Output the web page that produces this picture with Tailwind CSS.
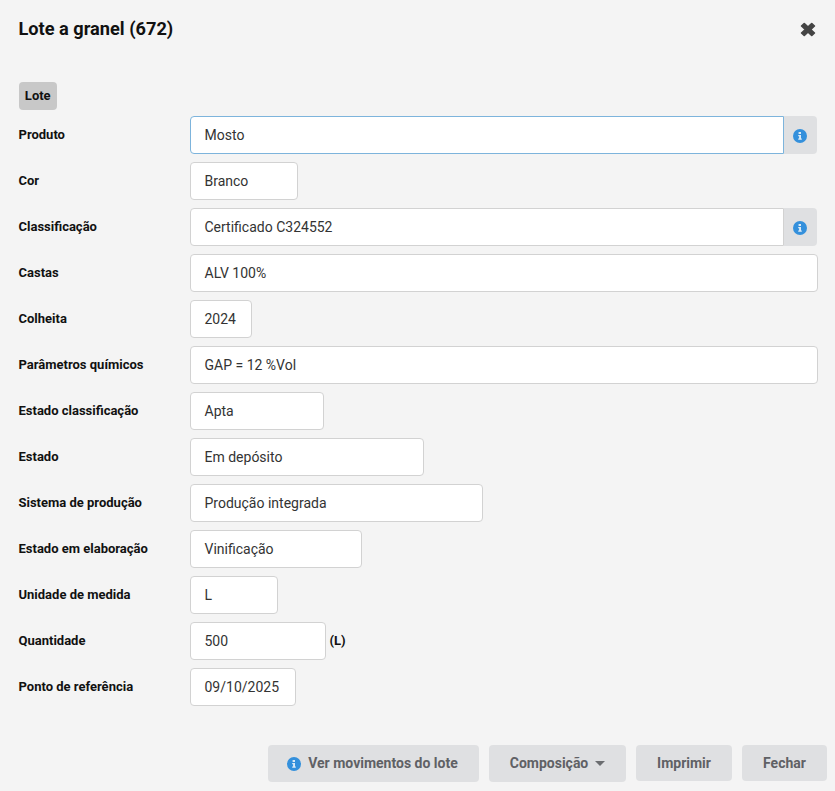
<!DOCTYPE html>
<html lang="pt">
<head>
<meta charset="utf-8">
<script src="https://cdn.jsdelivr.net/npm/@tailwindcss/browser@4"></script>
<title>Lote a granel</title>
</head>
<body class="bg-[#f4f4f4] font-['Roboto',sans-serif] text-[#111]">
<div class="w-[835px] h-[791px] overflow-hidden flex flex-col">
  <header class="h-[82px] pl-[18.5px] pr-[19px] flex items-start justify-between shrink-0">
    <h1 class="mt-[17px] text-[18.2px] leading-[24px] font-bold">Lote a granel (672)</h1>
    <svg class="mt-[22px] w-[16px] h-[15px]" viewBox="0 0 15 15" preserveAspectRatio="none"><path d="M1.5 4 L4 1.5 L7.5 5 L11 1.5 L13.5 4 L10 7.5 L13.5 11 L11 13.5 L7.5 10 L4 13.5 L1.5 11 L5 7.5 Z" fill="#444" stroke="#444" stroke-width="1.6" stroke-linejoin="round"/></svg>
  </header>
  <main class="pl-[18.5px] pr-[17px] flex-1 flex flex-col">
    <div class="h-[28px] w-[38.5px] rounded-[4px] bg-[#c8c8c8] text-[13px] font-bold flex items-center justify-center mb-[6px]">Lote</div>
    <div class="flex flex-col gap-[8px]">
      <div class="flex items-center h-[38px]">
        <label class="w-[171.5px] text-[13px] font-bold -mt-[1px]">Produto</label>
        <div class="flex-1 flex h-[38px] mr-[1px]">
          <div class="flex-1 h-full bg-white border border-[#7db4dc] rounded-l-[4px] pl-[13.5px] pr-[14px] flex items-center text-[14px] text-[#333]">Mosto</div>
          <div class="w-[33px] h-full bg-[#dfe0e2] rounded-r-[4px] flex items-center justify-center pr-[2px] pt-[1px]">
            <svg class="w-[14px] h-[14px]" viewBox="0 0 14 14"><circle cx="7" cy="7" r="7" fill="#3490dc"/><path d="M5.6 3h2.4v2H5.6z M5.2 6h2.8v3.6h0.8v1.2H5.2V9.6h0.9V7.2H5.2z" fill="#dbeaf6"/></svg>
          </div>
        </div>
      </div>
      <div class="flex items-center h-[38px]">
        <label class="w-[171.5px] text-[13px] font-bold -mt-[1px]">Cor</label>
        <div class="w-[108px] h-full bg-white border border-[#d2d2d2] rounded-[4px] pl-[13.5px] flex items-center text-[14px] text-[#333]">Branco</div>
      </div>
      <div class="flex items-center h-[38px]">
        <label class="w-[171.5px] text-[13px] font-bold -mt-[1px]">Classificação</label>
        <div class="flex-1 flex h-[38px] mr-[1px]">
          <div class="flex-1 h-full bg-white border border-[#d2d2d2] rounded-l-[4px] pl-[13.5px] flex items-center text-[14px] text-[#333]">Certificado C324552</div>
          <div class="w-[33px] h-full bg-[#dfe0e2] rounded-r-[4px] flex items-center justify-center pr-[2px] pt-[1px]">
            <svg class="w-[14px] h-[14px]" viewBox="0 0 14 14"><circle cx="7" cy="7" r="7" fill="#3490dc"/><path d="M5.6 3h2.4v2H5.6z M5.2 6h2.8v3.6h0.8v1.2H5.2V9.6h0.9V7.2H5.2z" fill="#dbeaf6"/></svg>
          </div>
        </div>
      </div>
      <div class="flex items-center h-[38px]">
        <label class="w-[171.5px] text-[13px] font-bold -mt-[1px]">Castas</label>
        <div class="flex-1 h-full bg-white border border-[#d2d2d2] rounded-[4px] pl-[13.5px] flex items-center text-[14px] text-[#333]">ALV 100%</div>
      </div>
      <div class="flex items-center h-[38px]">
        <label class="w-[171.5px] text-[13px] font-bold -mt-[1px]">Colheita</label>
        <div class="w-[62px] h-full bg-white border border-[#d2d2d2] rounded-[4px] pl-[13.5px] flex items-center text-[14px] text-[#333]">2024</div>
      </div>
      <div class="flex items-center h-[38px]">
        <label class="w-[171.5px] text-[13px] font-bold -mt-[1px]">Parâmetros químicos</label>
        <div class="flex-1 h-full bg-white border border-[#d2d2d2] rounded-[4px] pl-[13.5px] flex items-center text-[14px] text-[#333]">GAP = 12 %Vol</div>
      </div>
      <div class="flex items-center h-[38px]">
        <label class="w-[171.5px] text-[13px] font-bold -mt-[1px]">Estado classificação</label>
        <div class="w-[134px] h-full bg-white border border-[#d2d2d2] rounded-[4px] pl-[13.5px] flex items-center text-[14px] text-[#333]">Apta</div>
      </div>
      <div class="flex items-center h-[38px]">
        <label class="w-[171.5px] text-[13px] font-bold -mt-[1px]">Estado</label>
        <div class="w-[234px] h-full bg-white border border-[#d2d2d2] rounded-[4px] pl-[13.5px] flex items-center text-[14px] text-[#333]">Em depósito</div>
      </div>
      <div class="flex items-center h-[38px]">
        <label class="w-[171.5px] text-[13px] font-bold -mt-[1px]">Sistema de produção</label>
        <div class="w-[293px] h-full bg-white border border-[#d2d2d2] rounded-[4px] pl-[13.5px] flex items-center text-[14px] text-[#333]">Produção integrada</div>
      </div>
      <div class="flex items-center h-[38px]">
        <label class="w-[171.5px] text-[13px] font-bold -mt-[1px]">Estado em elaboração</label>
        <div class="w-[172px] h-full bg-white border border-[#d2d2d2] rounded-[4px] pl-[13.5px] flex items-center text-[14px] text-[#333]">Vinificação</div>
      </div>
      <div class="flex items-center h-[38px]">
        <label class="w-[171.5px] text-[13px] font-bold -mt-[1px]">Unidade de medida</label>
        <div class="w-[88px] h-full bg-white border border-[#d2d2d2] rounded-[4px] pl-[13.5px] flex items-center text-[14px] text-[#333]">L</div>
      </div>
      <div class="flex items-center h-[38px]">
        <label class="w-[171.5px] text-[13px] font-bold -mt-[1px]">Quantidade</label>
        <div class="w-[136px] h-full bg-white border border-[#d2d2d2] rounded-[4px] pl-[13.5px] flex items-center text-[14px] text-[#333]">500</div>
        <span class="ml-[3.5px] text-[13px] font-bold">(L)</span>
      </div>
      <div class="flex items-center h-[38px]">
        <label class="w-[171.5px] text-[13px] font-bold -mt-[1px]">Ponto de referência</label>
        <div class="w-[106px] h-full bg-white border border-[#d2d2d2] rounded-[4px] pl-[13.5px] flex items-center text-[14px] text-[#333]">09/10/2025</div>
      </div>
    </div>
  </main>
  <footer class="h-[46px] shrink-0 pr-[8px] flex items-start justify-end gap-[10px] text-[14px] font-bold text-[#5f6165]">
    <button class="w-[211px] h-[37px] bg-[#dfe0e2] rounded-[4px] flex items-center justify-center gap-[7px] pr-[2px]">
      <svg class="w-[14px] h-[14px]" viewBox="0 0 14 14"><circle cx="7" cy="7" r="7" fill="#3490dc"/><path d="M5.6 3h2.4v2H5.6z M5.2 6h2.8v3.6h0.8v1.2H5.2V9.6h0.9V7.2H5.2z" fill="#dbeaf6"/></svg>
      Ver movimentos do lote
    </button>
    <button class="w-[137px] h-[37px] bg-[#dfe0e2] rounded-[4px] flex items-center justify-center gap-[7px]">
      Composição
      <svg class="w-[10px] h-[5px]" viewBox="0 0 10 5"><path d="M0 0h10L5 5z" fill="#6b6d70"/></svg>
    </button>
    <button class="w-[96px] h-[36px] bg-[#dfe0e2] rounded-[4px]">Imprimir</button>
    <button class="w-[85px] h-[36px] bg-[#dfe0e2] rounded-[4px]">Fechar</button>
  </footer>
</div>
</body>
</html>
